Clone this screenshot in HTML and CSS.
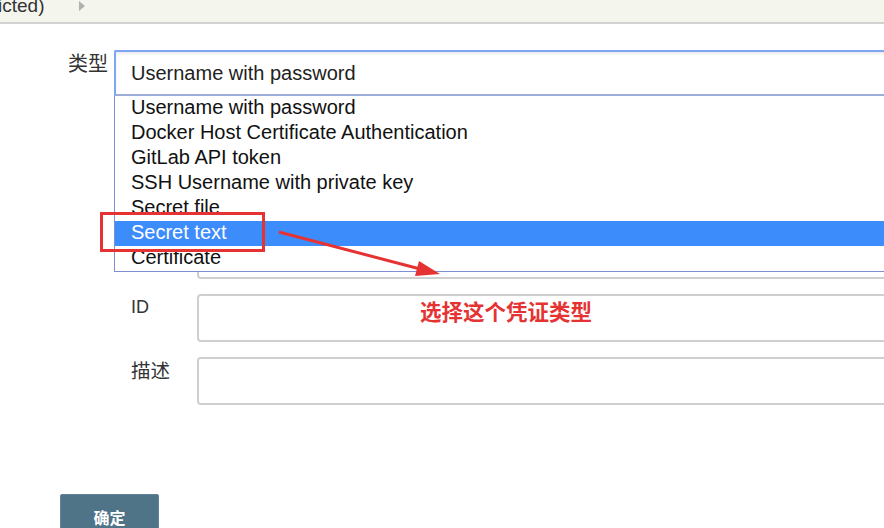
FILE: index.html
```html
<!DOCTYPE html>
<html lang="zh">
<head>
<meta charset="utf-8">
<link rel="stylesheet" href="styles.css">
</head>
<body>
<div class="topbar">
  <span class="crumb">icted)</span>
  <span class="caret"></span>
</div>
<main class="form">
  <div class="row-type">
    <label class="type-label">类型</label>
    <div class="select-wrap">
      <div class="select">Username with password</div>
      <ul class="dropdown">
        <li>Username with password</li>
        <li>Docker Host Certificate Authentication</li>
        <li>GitLab API token</li>
        <li>SSH Username with private key</li>
        <li>Secret file</li>
        <li class="selected">Secret text</li>
        <li>Certificate</li>
      </ul>
    </div>
  </div>
  <div class="nested">
    <div class="field">
      <label class="field-label">Secret</label>
      <div class="input"></div>
    </div>
    <div class="field">
      <label class="field-label">ID</label>
      <div class="input"></div>
    </div>
    <div class="field">
      <label class="field-label cjk">描述</label>
      <div class="input"></div>
    </div>
  </div>
  <div class="actions">
    <button class="btn">确定</button>
  </div>
</main>
<div class="mark-box"></div>
<svg class="mark-arrow" width="884" height="528" viewBox="0 0 884 528">
  <line x1="279" y1="232" x2="424" y2="270" stroke="#e53333" stroke-width="3"/>
  <polygon points="440,274 419,261 415,276" fill="#e53333"/>
</svg>
<div class="mark-text">选择这个凭证类型</div>
</body>
</html>
```
FILE: styles.css
```css
html, body {
  margin: 0;
  padding: 0;
  overflow: hidden;
  background: #fff;
}
body {
  width: 884px;
  height: 528px;
  position: relative;
  overflow: hidden;
  font-family: "Liberation Sans", Arial, "Noto Sans CJK SC", sans-serif;
  color: #333;
}
.topbar {
  height: 22px;
  background: #f4f6ee;
  border-bottom: 2px solid #d2d2d2;
  display: flex;
  align-items: flex-start;
  position: relative;
}
.crumb {
  font-size: 19px;
  line-height: 14px;
  margin-left: -2px;
  margin-top: -1px;
  color: #333;
}
.caret {
  width: 0;
  height: 0;
  border-top: 5px solid transparent;
  border-bottom: 5px solid transparent;
  border-left: 6px solid #b0b0b0;
  margin-left: 35px;
  margin-top: 1px;
}
.form {
  padding-top: 26px;
}
.row-type {
  display: flex;
  padding-left: 68px;
}
.type-label {
  width: 46px;
  flex-shrink: 0;
  font-family: "Noto Sans CJK SC", sans-serif;
  font-size: 20px;
  line-height: 22px;
  padding-top: 2px;
  color: #333;
}
.select-wrap {
  position: relative;
  width: 780px;
  flex-shrink: 0;
}
.select {
  height: 42px;
  border: 2px solid #7ea6f2;
  border-bottom: 2px solid #9aaed8;
  border-right: none;
  border-radius: 2px 0 0 0;
  box-shadow: 0 2px 3px rgba(0,0,0,0.08) inset;
  font-size: 20px;
  line-height: 42px;
  padding-left: 15px;
  color: #222;
  background: #fff;
}
.dropdown {
  position: absolute;
  top: 46px;
  left: 0;
  right: 0;
  margin: 0;
  padding: 0;
  list-style: none;
  background: #fff;
  border-left: 1px solid #7f8fd2;
  border-bottom: 1px solid #7f8fd2;
  z-index: 5;
}
.dropdown li {
  height: 25px;
  line-height: 23px;
  font-size: 20px;
  padding-left: 16px;
  color: #111;
}
.dropdown li.selected {
  background: #3d8cfc;
  color: #fff;
}
.nested {
  margin-top: 135px;
  display: flex;
  flex-direction: column;
  gap: 15px;
}
.field {
  display: flex;
  padding-left: 131px;
}
.field-label {
  width: 66px;
  flex-shrink: 0;
  font-family: "Liberation Sans", "Noto Sans CJK SC", sans-serif;
  font-size: 18px;
  line-height: 22px;
  padding-top: 2px;
  color: #333;
}
.field-label.cjk {
  font-family: "Noto Sans CJK SC", sans-serif;
  font-size: 19.5px;
}
.field .input {
  width: 720px;
  flex-shrink: 0;
  height: 44px;
  border: 2px solid #cfcfcf;
  border-radius: 4px;
  background: #fff;
}
.actions {
  padding-left: 60px;
  margin-top: 89px;
}
.btn {
  width: 99px;
  height: 40px;
  background: #4f7387;
  border: 1px solid #5f8296;
  border-radius: 2px 2px 0 0;
  color: #fff;
  font-family: "Noto Sans CJK SC", sans-serif;
  font-weight: 700;
  font-size: 16px;
  line-height: 20px;
  padding: 12px 0 0;
  display: flex;
  justify-content: center;
  align-items: flex-start;
}
.mark-box {
  position: absolute;
  left: 100px;
  top: 212px;
  width: 159px;
  height: 34px;
  border: 3px solid #e53333;
  z-index: 10;
}
.mark-arrow {
  position: absolute;
  left: 0;
  top: 0;
  z-index: 10;
  pointer-events: none;
}
.mark-text {
  position: absolute;
  left: 420px;
  top: 298px;
  font-family: "Noto Sans CJK SC", sans-serif;
  font-weight: 700;
  font-size: 21.5px;
  line-height: 26px;
  color: #e53333;
  z-index: 10;
}
```
